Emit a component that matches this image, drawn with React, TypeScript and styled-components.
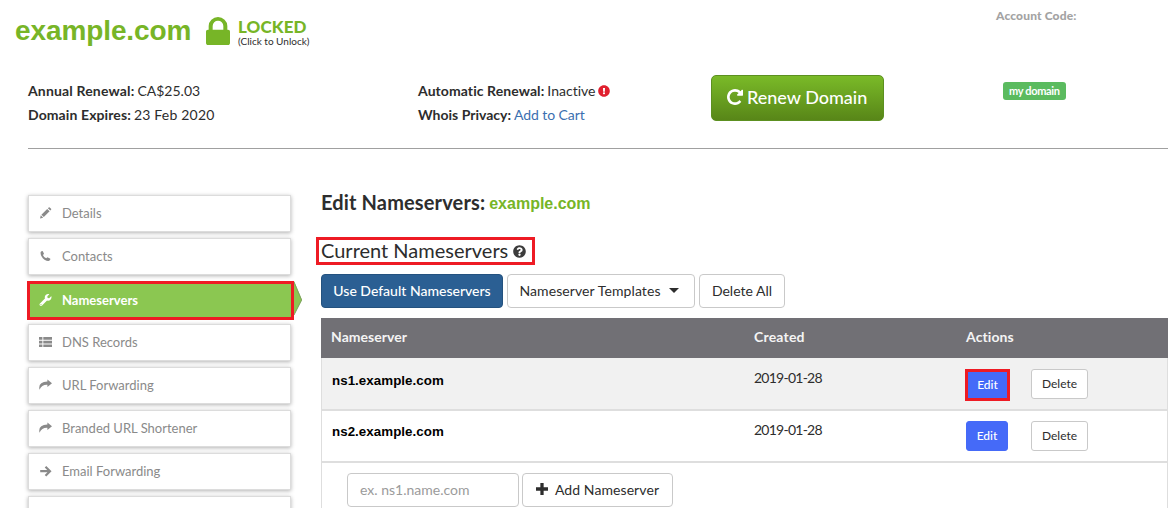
import React from "react";
import styled, { createGlobalStyle, css } from "styled-components";
import { FaExclamationCircle, FaQuestionCircle, FaWrench } from "react-icons/fa";

const GlobalStyle = createGlobalStyle`
  * { box-sizing: border-box; }
  body {
    margin: 0;
    background: #fff;
    color: #2d2d2d;
    font-family: Lato, "Liberation Sans", sans-serif;
    font-size: 14px;
    font-variant-ligatures: none;
  }
  button, input { font: inherit; color: inherit; margin: 0; }
  h1, h2, h3 { margin: 0; }
`;

const green = "#77b527";
const red = "#ee1b24";

const Page = styled.div`
  width: 1168px;
  height: 508px;
  overflow: hidden;
  white-space: nowrap;
`;

const Spaced = styled.span<{ $ls?: number }>`
  letter-spacing: ${(p) => p.$ls ?? 0}px;
`;

const TitleBar = styled.header`
  display: flex;
  height: 75px;
  padding-left: 15px;
`;

const DomainTitle = styled.h1`
  width: 191px;
  padding-top: 14px;
  font: bold 28px/34px "Liberation Sans", Arial, sans-serif;
  letter-spacing: -0.1px;
  color: ${green};
`;

const LockIcon = styled.svg`
  width: 24px;
  height: 28px;
  margin-top: 17px;
  fill: ${green};
`;

const LockText = styled.div`
  width: 766px;
  padding: 18px 0 0 8px;
`;

const LockState = styled.div`
  color: ${green};
  font-size: 17px;
  font-weight: 900;
  line-height: 18px;
  letter-spacing: 0.1px;
`;

const LockHint = styled.div`
  font-size: 10px;
  line-height: 11px;
`;

const AccountCode = styled.div`
  padding-top: 8px;
  color: #a3a3a3;
  font-size: 12px;
  font-weight: 900;
  line-height: 16px;
`;

const Summary = styled.section`
  display: flex;
  height: 74px;
  margin-left: 28px;
  border-bottom: 1px solid #a0a0a0;
`;

const Facts = styled.div<{ $width: number }>`
  width: ${(p) => p.$width}px;
  padding-top: 3px;
`;

const Fact = styled.div`
  display: flex;
  align-items: center;
  gap: 3px;
  height: 24px;
  strong { font-weight: 700; }
  a { color: #3b6fb0; }
  svg { color: #e0202f; font-size: 12px; margin-top: 1px; }
`;

const RenewButton = styled.button`
  display: flex;
  align-items: center;
  gap: 4px;
  width: 173px;
  height: 46px;
  margin-right: 119px;
  padding: 0 0 3px 15px;
  border: 1px solid #5c9020;
  border-radius: 5px;
  background: linear-gradient(#7aba28, #588618);
  color: #fff;
  font-size: 18px;
  font-weight: 500;
  svg { width: 16px; height: 16px; fill: #fff; }
`;

const Badge = styled.span`
  height: 18px;
  margin-top: 7px;
  padding: 0 6px;
  width: 63px;
  border-radius: 3px;
  background: #5bbb5f;
  color: #fff;
  font-size: 11px;
  font-weight: 700;
  line-height: 17px;
  letter-spacing: -0.33px;
`;

const Body = styled.div`
  display: flex;
  padding: 46px 0 0 28px;
`;

const Menu = styled.nav`
  display: flex;
  flex-direction: column;
  gap: 6px;
  width: 293px;
`;

const MenuItem = styled.div<{ $active?: boolean }>`
  position: relative;
  display: flex;
  align-items: center;
  flex: none;
  width: 263px;
  height: 37px;
  padding: 0 0 1px 10px;
  border: 1px solid #dcdcdc;
  background: #fff;
  color: #8a8a8a;
  font-size: 13px;
  box-shadow: 0 1px 4px rgba(0, 0, 0, 0.3);
  ${(p) =>
    p.$active &&
    css`
      width: 267px;
      height: 39px;
      margin: 0 0 -2px -1px;
      padding: 0 0 2px 9px;
      border: 3px solid ${red};
      background: #8bc751;
      box-shadow: none;
      color: #fff;
      font-weight: 700;
    `}
`;

const MenuIcon = styled.span`
  display: flex;
  width: 23px;
  fill: currentColor;
  svg { width: 13px; height: 12px; }
`;

const MenuPointer = styled.svg`
  position: absolute;
  left: 264px;
  top: -3px;
  width: 9px;
  height: 35px;
`;

const Main = styled.main`
  width: 847px;
`;

const EditHeading = styled.h2`
  display: flex;
  align-items: baseline;
  gap: 4px;
  height: 42px;
  font-size: 20px;
  font-weight: 700;
  line-height: 15px;
`;

const HeadingDomain = styled.span`
  position: relative;
  top: -1px;
  font: bold 16px/16px "Liberation Sans", Arial, sans-serif;
  color: ${green};
`;

const CurrentHeading = styled.h3`
  display: flex;
  align-items: center;
  gap: 5px;
  width: 219px;
  height: 28px;
  margin: 0 0 9px -5px;
  padding: 0 0 3px 2px;
  border: 3px solid ${red};
  font-size: 20px;
  font-weight: 400;
  svg { font-size: 13px; color: #3c3c3c; margin-top: 4px; }
`;

const Toolbar = styled.div`
  display: flex;
  gap: 4px;
  margin-bottom: 10px;
`;

const Button = styled.button<{ $width: number; $small?: boolean; $tone?: "navy" | "blue" }>`
  display: flex;
  align-items: center;
  justify-content: center;
  width: ${(p) => p.$width}px;
  height: ${(p) => (p.$small ? 30 : 34)}px;
  padding: 0 0 2px;
  border: 1px solid #c9c9c9;
  border-radius: ${(p) => (p.$small ? 3 : 4)}px;
  background: #fff;
  font-size: ${(p) => (p.$small ? 12 : 14)}px;
  ${(p) =>
    p.$tone === "navy" &&
    css`
      border-color: #24527f;
      background: #2b5f93;
      color: #fff;
      font-weight: 500;
    `}
  ${(p) =>
    p.$tone === "blue" &&
    css`
      border-color: #456af8;
      background: #456af8;
      color: #fff;
      font-weight: 500;
    `}
`;

const Caret = styled.span`
  margin: 1px 4px 0 8px;
  border: 5px solid transparent;
  border-top: 5px solid #2d2d2d;
  border-bottom: 0;
`;

const Highlight = styled.div`
  width: 45px;
  height: 32px;
  margin-left: -1px;
  border: 3px solid ${red};
  ${Button} { width: 39px; height: 26px; border-radius: 0; }
`;

const Table = styled.div`
  height: 200px;
  border: 1px solid #dedede;
  border-width: 0 1px;
`;

const Row = styled.div<{ $shade?: boolean; $height: number }>`
  display: grid;
  grid-template-columns: 423px 212px 65px auto;
  height: ${(p) => p.$height}px;
  padding-left: 9px;
  border-bottom: 2px solid #dedede;
  background: ${(p) => (p.$shade ? "#f1f1f1" : "#fff")};
`;

const HeadRow = styled(Row)`
  align-items: center;
  margin: 0 -1px;
  padding: 0 0 3px 10px;
  border-bottom: 0;
  background: #717075;
  color: #f4f4f4;
  font-weight: 700;
`;

const Host = styled.div<{ $top: number }>`
  font: bold 13.333px/16px "Liberation Sans", Arial, sans-serif;
  letter-spacing: 0.05px;
  color: #000;
  padding: ${(p) => p.$top}px 0 0 1px;
`;

const Created = styled.div<{ $top: number }>`
  padding-top: ${(p) => p.$top}px;
  line-height: 17px;
  letter-spacing: -0.75px;
`;

const Action = styled.div<{ $top: number }>`
  padding-top: ${(p) => p.$top}px;
`;

const AddRow = styled.div`
  display: flex;
  gap: 3px;
  padding: 10px 0 0 25px;
`;

const HostInput = styled.input`
  width: 172px;
  height: 34px;
  padding: 0 0 1px 12px;
  border: 1px solid #c9c9c9;
  border-radius: 4px;
  background: #fff;
  outline: 0;
  &::placeholder { color: #9b9b9b; opacity: 1; }
`;

const PlusIcon = styled.svg`
  width: 12px;
  height: 12px;
  margin-right: 7px;
  fill: #2d2d2d;
`;

const Pencil = () => (
  <svg viewBox="0 0 13 12">
    <path d="M1 11.500L1.800 8.300L4.200 10.700ZM2.400 7.700L8.200 1.900L10.600 4.300L4.800 10.100ZM8.900 1.200L9.700.400Q10.200 0 10.700.400L12.100 1.800Q12.500 2.300 12.100 2.800L11.300 3.600Z" />
  </svg>
);

const Phone = () => (
  <svg viewBox="0 0 13 12">
    <path d="M1.600 2.300Q1.900 1.100 3.100.900Q3.600.800 3.800 1.300L4.900 3.500Q5.100 4 4.700 4.300L3.900 5Q4.800 7.200 7.200 8.300L8.100 7.500Q8.400 7.200 8.900 7.400L11 8.600Q11.500 8.900 11.300 9.400Q10.800 10.700 9.500 11Q8 11.200 5.500 9.700Q3.600 8.500 2.500 6.300Q1.400 4.200 1.600 2.300Z" />
  </svg>
);

const List = () => (
  <svg viewBox="0 0 13 12">
    <path d="M0 1h3.400v2.700H0zM4.300 1H13v2.700H4.300zM0 4.700h3.400v2.700H0zM4.300 4.700H13v2.700H4.300zM0 8.400h3.400v2.700H0zM4.300 8.400H13v2.700H4.300z" />
  </svg>
);

const Share = () => (
  <svg viewBox="0 0 13 12">
    <path d="M8.400.400L13 4.200L8.400 8V5.800Q2.800 5.500.500 10.700Q-1.200 3 8.400 2.600Z" />
  </svg>
);

const Arrow = () => (
  <svg viewBox="0 0 13 12">
    <path d="M6.500 1.700L11 6.200L6.500 10.700M1.200 6.200H10.300" fill="none" stroke="currentColor" strokeWidth="2.200" />
  </svg>
);

const menu = [
  { label: "Details", icon: <Pencil /> },
  { label: "Contacts", icon: <Phone /> },
  { label: "Nameservers", icon: <FaWrench />, active: true },
  { label: "DNS Records", icon: <List /> },
  { label: "URL Forwarding", icon: <Share /> },
  { label: "Branded URL Shortener", icon: <Share /> },
  { label: "Email Forwarding", icon: <Arrow /> },
  { label: "", icon: null },
];

const hosts = [
  { name: "ns1.example.com", created: "2019-01-28", marked: true },
  { name: "ns2.example.com", created: "2019-01-28", marked: false },
];

const EditButton = () => (
  <Button $width={42} $small $tone="blue">
    Edit
  </Button>
);

export default function App() {
  return (
    <Page>
      <GlobalStyle />
      <TitleBar>
        <DomainTitle>example.com</DomainTitle>
        <LockIcon viewBox="0 128 1152 1408" preserveAspectRatio="none">
          <path d="M320 768h512v-192q0-106-75-181t-181-75-181 75-75 181v192zm832 96v576q0 40-28 68t-68 28h-960q-40 0-68-28t-28-68v-576q0-40 28-68t68-28h32v-192q0-184 132-316t316-132 316 132 132 316v192h32q40 0 68 28t28 68z" />
        </LockIcon>
        <LockText>
          <LockState>LOCKED</LockState>
          <LockHint>(Click to Unlock)</LockHint>
        </LockText>
        <AccountCode>
          <Spaced $ls={0.15}>Account Code:</Spaced>
        </AccountCode>
      </TitleBar>

      <Summary>
        <Facts $width={390}>
          <Fact>
            <strong>
              <Spaced $ls={0.16}>Annual Renewal:</Spaced>
            </strong>
            CA$25.03
          </Fact>
          <Fact>
            <strong>
              <Spaced $ls={0.1}>Domain Expires:</Spaced>
            </strong>
            <Spaced $ls={0.2}>23 Feb 2020</Spaced>
          </Fact>
        </Facts>
        <Facts $width={293}>
          <Fact>
            <strong>
              <Spaced $ls={0.08}>Automatic Renewal:</Spaced>
            </strong>
            Inactive
            <FaExclamationCircle />
          </Fact>
          <Fact>
            <strong>Whois Privacy:</strong>
            <Spaced as="a" $ls={-0.08}>Add to Cart</Spaced>
          </Fact>
        </Facts>
        <RenewButton>
          <svg viewBox="128 128 1536 1536">
            <path d="M1664 256v448q0 26-19 45t-45 19h-448q-42 0-59-40-17-39 14-69l138-138q-148-137-349-137-104 0-198.500 40.500t-163.500 109.500-109.500 163.500-40.500 198.500 40.500 198.500 109.500 163.500 163.500 109.500 198.500 40.500q119 0 225-52t179-147q7-10 23-12 15 0 25 9l137 138q9 8 9.500 20.500t-7.500 22.500q-109 132-264 204.500t-327 72.500q-156 0-298-61t-245-164-164-245-61-298 61-298 164-245 245-164 298-61q147 0 284.500 55.500t244.500 156.500l130-129q29-31 70-14 39 17 39 59z" />
          </svg>
          Renew Domain
        </RenewButton>
        <Badge>my domain</Badge>
      </Summary>

      <Body>
        <Menu>
          {menu.map((item, i) => (
            <MenuItem key={i} $active={item.active}>
              <MenuIcon>{item.icon}</MenuIcon>
              {item.label}
              {item.active && (
                <MenuPointer viewBox="0 0 9 35">
                  <path d="M0 0L8 19L0 34Z" fill="#8bc751" />
                  <path d="M0 1L7.600 19L0 34" fill="none" stroke="#7d9c63" strokeWidth="0.900" />
                </MenuPointer>
              )}
            </MenuItem>
          ))}
        </Menu>

        <Main>
          <EditHeading>
            <Spaced $ls={0.14}>Edit Nameservers:</Spaced>
            <HeadingDomain>example.com</HeadingDomain>
          </EditHeading>
          <CurrentHeading>
            Current Nameservers
            <FaQuestionCircle />
          </CurrentHeading>
          <Toolbar>
            <Button $width={182} $tone="navy">
              Use Default Nameservers
            </Button>
            <Button $width={188}>
              <Spaced $ls={0.1}>Nameserver Templates</Spaced>
              <Caret />
            </Button>
            <Button $width={86}>Delete All</Button>
          </Toolbar>
          <Table>
            <HeadRow $height={40}>
              <Spaced $ls={0.05}>Nameserver</Spaced>
              <Spaced $ls={0.2}>Created</Spaced>
              <Spaced $ls={0.1}>Actions</Spaced>
            </HeadRow>
            {hosts.map((host) => (
              <Row key={host.name} $shade={host.marked} $height={host.marked ? 53 : 52}>
                <Host $top={host.marked ? 15 : 13}>{host.name}</Host>
                <Created $top={host.marked ? 11 : 10}>{host.created}</Created>
                <Action $top={host.marked ? 11 : 10}>
                  {host.marked ? (
                    <Highlight>
                      <EditButton />
                    </Highlight>
                  ) : (
                    <EditButton />
                  )}
                </Action>
                <Action $top={host.marked ? 11 : 10}>
                  <Button $width={57} $small>
                    Delete
                  </Button>
                </Action>
              </Row>
            ))}
            <AddRow>
              <HostInput placeholder="ex. ns1.name.com" />
              <Button $width={151}>
                <PlusIcon viewBox="0 0 11 11">
                  <path d="M4 0h3v4h4v3H7v4H4V7H0V4h4z" />
                </PlusIcon>
                <Spaced $ls={0.08}>Add Nameserver</Spaced>
              </Button>
            </AddRow>
          </Table>
        </Main>
      </Body>
    </Page>
  );
}
